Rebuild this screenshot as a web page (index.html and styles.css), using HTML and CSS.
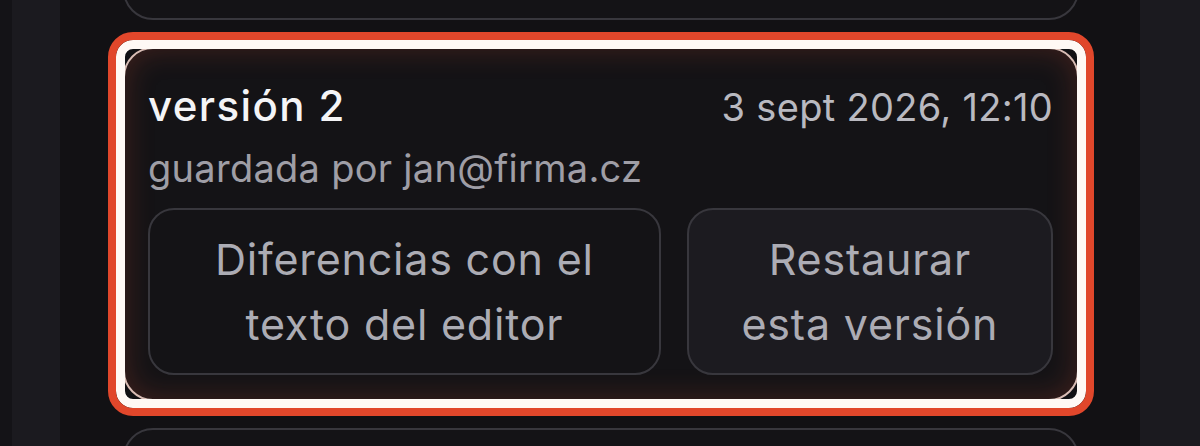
FILE: index.html
```html
<!DOCTYPE html>
<html lang="es">
<head>
<meta charset="utf-8">
<title>Versiones</title>
<link rel="stylesheet" href="styles.css">
</head>
<body>
<div class="app">
  <div class="rail"></div>
  <div class="side"></div>
  <main class="panel">
    <div class="list">
      <article class="card">
        <div class="card-head">
          <h3 class="title">versión 3</h3>
          <span class="date">3 sept 2026, 12:40</span>
        </div>
        <p class="author">guardada por jan@firma.cz</p>
        <div class="actions">
          <button class="btn">Diferencias con el<br>texto del editor</button>
          <button class="btn btn-alt">Restaurar<br>esta versión</button>
        </div>
      </article>
      <article class="card card-active">
        <div class="card-head">
          <h3 class="title">versión 2</h3>
          <span class="date">3 sept 2026, 12:10</span>
        </div>
        <p class="author">guardada por jan@firma.cz</p>
        <div class="actions">
          <button class="btn">Diferencias con el<br>texto del editor</button>
          <button class="btn btn-alt">Restaurar<br>esta versión</button>
        </div>
      </article>
      <article class="card">
        <div class="card-head">
          <h3 class="title">versión 1</h3>
          <span class="date">3 sept 2026, 11:55</span>
        </div>
        <p class="author">guardada por jan@firma.cz</p>
      </article>
    </div>
  </main>
  <div class="aside"></div>
</div>
</body>
</html>
```

FILE: styles.css
```css
* { box-sizing: border-box; }

html, body {
  margin: 0;
  height: 100%;
  background: #141317;
  font-family: Inter, "Noto Sans", sans-serif;
  overflow: hidden;
}

.app {
  display: grid;
  grid-template-columns: 12px 48px 1fr 60px;
  height: 446px;
}

.rail { background: #141317; }
.side { background: #1b1a1f; }
.aside { background: #1b1a1f; }

.panel {
  background: #121114;
  overflow: hidden;
  padding: 0 61px 0 63px;
}

.list {
  display: flex;
  flex-direction: column;
  gap: 27px;
  margin-top: -334px;
}

.card {
  position: relative;
  background: #141316;
  border: 2px solid #38373d;
  border-radius: 30px;
  padding: 29px 24px 24px 23px;
  min-height: 354px;
}

.card-active {
  border-color: #d9bcb4;
  box-shadow: inset 0 0 30px rgba(214, 80, 50, 0.24);
}

.card-active::after {
  content: "";
  position: absolute;
  inset: -17px;
  border: 8px solid #e1472b;
  border-radius: 25px;
  box-shadow: inset 0 0 0 9px #fff9f5;
  pointer-events: none;
}

.card-head {
  display: flex;
  justify-content: space-between;
  align-items: baseline;
}

.title {
  margin: 0;
  font-size: 42px;
  line-height: 56px;
  font-weight: 500;
  letter-spacing: 1.4px;
  color: #f4f4f6;
}

.date {
  font-size: 38px;
  letter-spacing: 0.3px;
  color: #b9b9c0;
}

.author {
  margin: 9px 0 0;
  font-size: 38px;
  line-height: 50px;
  letter-spacing: 0.28px;
  color: #9f9ea6;
}

.actions {
  display: grid;
  grid-template-columns: 1.4fr 1fr;
  gap: 26px;
  margin-top: 15px;
}

.btn {
  font-family: inherit;
  font-size: 43px;
  line-height: 65px;
  letter-spacing: 0.8px;
  color: #acacb4;
  background: #141316;
  border: 2px solid #38373d;
  border-radius: 26px;
  padding: 16.5px 10px;
  text-align: center;
}

.btn-alt { background: #1c1b20; }
```
